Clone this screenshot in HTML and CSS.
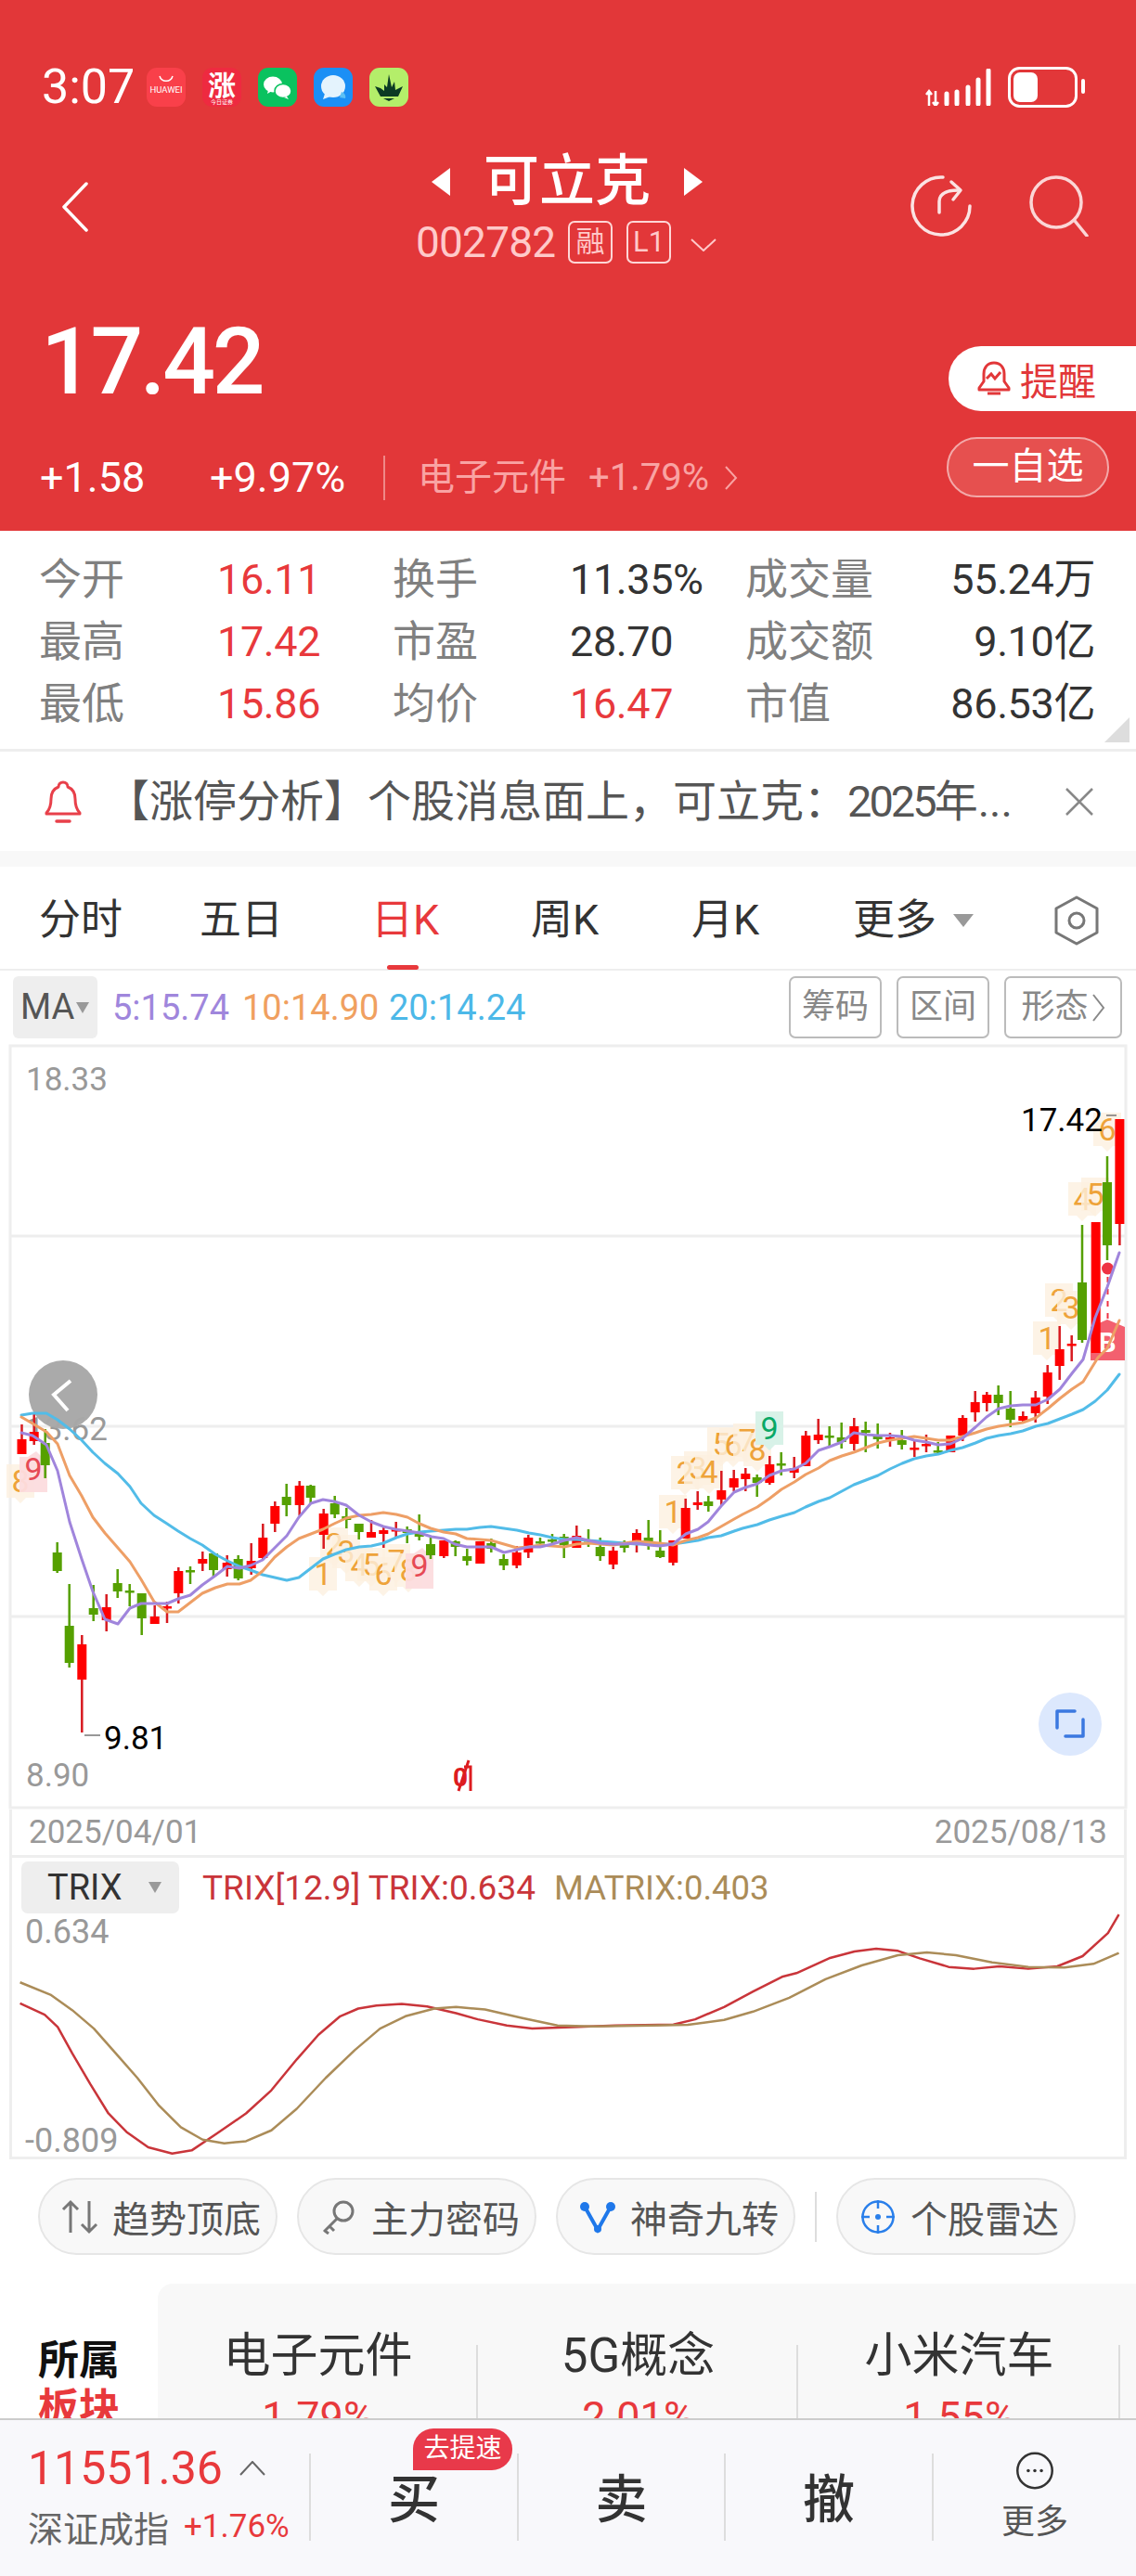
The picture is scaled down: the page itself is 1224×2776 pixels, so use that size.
FILE: index.html
```html
<!DOCTYPE html>
<html lang="zh">
<head>
<meta charset="utf-8">
<title>可立克 002782</title>
<link rel="stylesheet" href="styles.css">
</head>
<body>
<div class="page">
  <header class="header">
    <div class="status">
      <span class="time">3:07</span>
      <div class="apps">
        <svg class="app" viewBox="0 0 42 42"><rect width="42" height="42" rx="11" fill="#f9404a"/><path d="M14 9c2 7 12 7 14 0" fill="none" stroke="#fff" stroke-width="1.5"/><text class="app-txt" x="21" y="27" text-anchor="middle">HUAWEI</text></svg>
        <svg class="app" viewBox="0 0 42 42"><rect width="42" height="42" rx="11" fill="#ee2a40"/><text class="app-zhang" x="21" y="30" text-anchor="middle">涨</text><text class="app-sub" x="21" y="39" text-anchor="middle">今日证券</text></svg>
        <svg class="app" viewBox="0 0 42 42"><rect width="42" height="42" rx="11" fill="#0ac25f"/><ellipse cx="16" cy="18" rx="10" ry="8.5" fill="#fff"/><path d="M11 24l-1 4 5-3z" fill="#fff"/><ellipse cx="27" cy="25" rx="9" ry="7.5" fill="#fff" stroke="#0ac25f" stroke-width="1.5"/><path d="M31 31l2 3-5-2z" fill="#fff"/></svg>
        <svg class="app" viewBox="0 0 42 42"><rect width="42" height="42" rx="11" fill="#1b8ff5"/><ellipse cx="21" cy="20" rx="13" ry="12" fill="#e4f3fd"/><path d="M12 28l-2 6 8-3z" fill="#e4f3fd"/><path d="M30 26c3 1 5 4 4 7l-6-1z" fill="#5cc0f5"/></svg>
        <svg class="app" viewBox="0 0 42 42"><rect width="42" height="42" rx="11" fill="#b4ee6a"/><path d="M6 20l6 2 4 3V18l3 3 2-14 3 14 3-6 1 9 8-4-5 11H12z" fill="#0b3a24"/><path d="M15 33h12l-6 3z" fill="#0b3a24"/></svg>
      </div>
      <div class="sys">
        <svg class="signal" viewBox="0 0 72 40"><path d="M5 40V24M2 28l3-4 3 4M12 24v16M9 36l3 4 3-4" fill="none" stroke="#fff" stroke-width="2.5"/><path d="M24 38V27M35 38V25M47 38V20M58 38V12M69 38V2" fill="none" stroke="#fff" stroke-width="5" stroke-linecap="round"/></svg>
        <svg class="battery" viewBox="0 0 84 44"><rect x="1.5" y="1.5" width="72" height="41" rx="11" fill="none" stroke="#fff" stroke-width="3"/><rect x="6" y="6" width="26" height="32" rx="7" fill="#fff"/><rect x="79" y="13" width="4" height="16" rx="2" fill="#fff"/></svg>
      </div>
    </div>
    <nav class="nav">
      <svg class="back" viewBox="0 0 30 54"><path d="M27 2L3 27l24 25" fill="none" stroke="#fff" stroke-width="3.5" stroke-linecap="round" stroke-linejoin="round"/></svg>
      <div class="nav-mid">
        <div class="title-row"><i class="tri tri-l"></i><span class="name">可立克</span><i class="tri tri-r"></i></div>
        <div class="code-row"><span class="code">002782</span><span class="tag">融</span><span class="tag">L1</span><svg class="code-arrow" viewBox="0 0 28 14"><path d="M1 1l13 12L27 1" fill="none" stroke="#ffc9c9" stroke-width="2"/></svg></div>
      </div>
      <div class="nav-right">
        <svg class="nav-ico" viewBox="0 0 66 66"><path d="M35 2A31 31 0 1 0 64 33" fill="none" stroke="#fbe3e3" stroke-width="3.5" stroke-linecap="round"/><path d="M31 40V28c0-8 8-12 21-12" fill="none" stroke="#fbe3e3" stroke-width="3.5" stroke-linecap="round"/><path d="M44 7l10 9-8 10" fill="none" stroke="#fbe3e3" stroke-width="3.5" stroke-linecap="round" stroke-linejoin="round"/></svg>
        <svg class="nav-ico" viewBox="0 0 66 66"><circle cx="31" cy="29" r="27" fill="none" stroke="#fbd6d6" stroke-width="3.5"/><path d="M51 49l13 16" stroke="#fbd6d6" stroke-width="3.5" stroke-linecap="round"/></svg>
      </div>
    </nav>
    <div class="quote">
      <div class="quote-left">
        <div class="price">17.42</div>
        <div class="change-row">
          <span class="chg chg-a">+1.58</span>
          <span class="chg chg-b">+9.97%</span>
          <i class="vbar"></i>
          <span class="sec-name">电子元件</span>
          <span class="sec-pct">+1.79%</span>
          <svg class="sec-arrow" viewBox="0 0 14 26"><path d="M1 1l11 12L1 25" fill="none" stroke="#f9a3a3" stroke-width="2"/></svg>
        </div>
      </div>
      <div class="quote-right">
        <div class="btn-remind"><svg class="remind-ico" viewBox="0 0 36 40"><path d="M18 3c-7 0-11 5-11 12v8l-5 7v2h32v-2l-5-7v-8c0-7-4-12-11-12z" fill="none" stroke="#e23739" stroke-width="3" stroke-linejoin="round"/><path d="M11 36h14M10 20l5-5 4 5 6-7" fill="none" stroke="#e23739" stroke-width="3"/></svg><span>提醒</span></div>
        <div class="btn-fav"><span>一自选</span></div>
      </div>
    </div>
  </header>

  <section class="stats">
    <span class="lbl">今开</span><span class="val up">16.11</span><span class="lbl">换手</span><span class="val">11.35%</span><span class="lbl">成交量</span><span class="val right">55.24万</span>
    <span class="lbl">最高</span><span class="val up">17.42</span><span class="lbl">市盈</span><span class="val">28.70</span><span class="lbl">成交额</span><span class="val right">9.10亿</span>
    <span class="lbl">最低</span><span class="val up">15.86</span><span class="lbl">均价</span><span class="val up">16.47</span><span class="lbl">市值</span><span class="val right">86.53亿</span>
    <i class="corner"></i>
  </section>

  <section class="notice">
    <svg class="notice-bell" viewBox="0 0 40 46"><path d="M20 2c-3 0-5 2-5 5-5 2-8 7-8 13 0 7-1 11-5 15v1h36v-1c-4-4-5-8-5-15 0-6-3-11-8-13 0-3-2-5-5-5z" fill="none" stroke="#e8404a" stroke-width="3" stroke-linejoin="round"/><path d="M13 44h14" stroke="#e8404a" stroke-width="3.5" stroke-linecap="round"/></svg>
    <span class="notice-text">【涨停分析】个股消息面上，可立克：<span class="tight">2025</span>年...</span>
    <svg class="notice-x" viewBox="0 0 32 30"><path d="M2 1l28 28M30 1L2 29" stroke="#888" stroke-width="2.5"/></svg>
  </section>

  <section class="tabs">
    <span class="tab">分时</span><span class="tab">五日</span><span class="tab active">日K</span><span class="tab">周K</span><span class="tab">月K</span>
    <span class="tab more">更多<i class="caret caret-lg"></i></span>
    <svg class="hex" viewBox="0 0 50 54"><path d="M25 2l22 12v26L25 52 3 40V14z" fill="none" stroke="#777" stroke-width="3" stroke-linejoin="round"/><circle cx="25" cy="27" r="8" fill="none" stroke="#777" stroke-width="3"/></svg>
  </section>

  <section class="ma-row">
    <div class="ma-btn">MA<i class="caret"></i></div>
    <span class="ma ma5">5:15.74</span><span class="ma ma10">10:14.90</span><span class="ma ma20">20:14.24</span>
    <div class="ma-tools"><span class="mini m1">筹码</span><span class="mini m2">区间</span><span class="mini m3">形态<svg class="mini-arrow" viewBox="0 0 14 30"><path d="M1 1l11 14L1 29" fill="none" stroke="#888" stroke-width="2"/></svg></span></div>
  </section>

  <svg class="kline" viewBox="0 1125 1224 825" width="1224" height="825">
    <defs><path id="bub" d="M-15 -19h30v36h-9l-6 6-6-6h-9z"/><path id="bubup" d="M-15 -14h9l9 -6 6 6h6v38h-30z"/></defs>
    <path class="frame" d="M11 1127H1213V1948H11zM11 1332H1213M11 1537H1213M11 1742H1213"/>
    <text class="axis" x="28" y="1175">18.33</text>
    <text class="axis" x="28" y="1552">13.62</text>
    <text class="axis" x="28" y="1925">8.90</text>
    <circle cx="68" cy="1503" r="37" fill="#a7a7a7" opacity=".97"/>
    <path d="M76 1488l-18 15 15 17" fill="none" stroke="#fff" stroke-width="4"/>

    <g class="mk"><use href="#bub" x="22" y="1597"/><text x="22" y="1608">8</text></g>
    <g class="mk pink"><use href="#bubup" x="36" y="1584"/><text x="36" y="1595">9</text></g>
    <g class="mk"><use href="#bub" x="348" y="1697"/><text x="348" y="1708">1</text></g>
    <g class="mk"><use href="#bub" x="360" y="1665"/><text x="360" y="1676">2</text></g>
    <g class="mk"><use href="#bub" x="373" y="1673"/><text x="373" y="1684">3</text></g>
    <g class="mk"><use href="#bub" x="387" y="1687"/><text x="387" y="1698">4</text></g>
    <g class="mk"><use href="#bub" x="400" y="1687"/><text x="400" y="1698">5</text></g>
    <g class="mk"><use href="#bub" x="413" y="1697"/><text x="413" y="1708">6</text></g>
    <g class="mk"><use href="#bub" x="427" y="1683"/><text x="427" y="1694">7</text></g>
    <g class="mk"><use href="#bub" x="440" y="1693"/><text x="440" y="1704">8</text></g>
    <g class="mk pink"><use href="#bubup" x="452" y="1688"/><text x="452" y="1699">9</text></g>
    <g class="mk"><use href="#bub" x="725" y="1630"/><text x="725" y="1641">1</text></g>
    <g class="mk"><use href="#bub" x="738" y="1588"/><text x="738" y="1599">2</text></g>
    <g class="mk"><use href="#bub" x="752" y="1583"/><text x="752" y="1594">3</text></g>
    <g class="mk"><use href="#bub" x="764" y="1587"/><text x="764" y="1598">4</text></g>
    <g class="mk"><use href="#bub" x="777" y="1557"/><text x="777" y="1568">5</text></g>
    <g class="mk"><use href="#bub" x="790" y="1558"/><text x="790" y="1569">6</text></g>
    <g class="mk"><use href="#bub" x="805" y="1553"/><text x="805" y="1564">7</text></g>
    <g class="mk"><use href="#bub" x="816" y="1563"/><text x="816" y="1574">8</text></g>
    <g class="mk mint"><use href="#bub" x="829" y="1540"/><text x="829" y="1551">9</text></g>
    <g class="mk"><use href="#bub" x="1128" y="1443"/><text x="1128" y="1454">1</text></g>
    <g class="mk"><use href="#bub" x="1141" y="1402"/><text x="1141" y="1413">2</text></g>
    <g class="mk"><use href="#bub" x="1154" y="1410"/><text x="1154" y="1421">3</text></g>
    <g class="mk"><use href="#bub" x="1166" y="1293"/><text x="1166" y="1304">4</text></g>
    <g class="mk"><use href="#bub" x="1180" y="1288"/><text x="1180" y="1299">5</text></g>
    <g class="mk"><use href="#bub" x="1193" y="1218"/><text x="1193" y="1229">6</text></g>

    <path d="M1175 1430L1193 1422L1212 1430V1466H1175z" fill="#f3606f"/>
    <text class="b-mark" x="1193" y="1457">B</text>
    <path d="M1193.500 1376V1424" stroke="#ee3344" stroke-width="2" stroke-dasharray="6 7"/>
    <circle cx="1193.500" cy="1367" r="6.500" fill="#ee3344"/>

    <path class="wick-r" d="M23.5 1535V1567M36.7 1522V1557M88.3 1762V1867M114.7 1718V1758M166.7 1730V1750M180 1726V1749M192.3 1689V1728M218.3 1672V1693M244.7 1676V1699M270.7 1663V1697M283.3 1642V1680M296.3 1618V1651M322.7 1596V1633M348.700 1626V1669M400 1638V1657M413.3 1644V1668M426.7 1640V1657M478.3 1660V1679M517.3 1661V1685M556.7 1666V1690M569.3 1654V1679M621.3 1644V1668M660.7 1667V1691M686 1648V1673M725.3 1660V1687M738.7 1615V1658M751.7 1607V1627M777.3 1585V1623M790.7 1584V1607M803.3 1582V1607M829.3 1569V1600M855.7 1570V1593M868.3 1542V1580M881.7 1529V1556M920.3 1528V1563M959 1544V1559M985.3 1552V1570M998 1546V1565M1024.3 1547V1565M1037.3 1525V1553M1050.7 1499V1532M1063.3 1500V1521M1102.3 1521V1533M1115.7 1499V1533M1128.7 1471V1513M1141.7 1429V1487M1154.7 1439V1467M1180.7 1317V1458M1206.4 1206V1342"/>
    <path class="body-r" d="M23.5 1551V1567M36.7 1543V1553M88.3 1772V1810M114.7 1732V1746M166.7 1742V1750M180 1731V1733.500M192.3 1693V1717M218.3 1680V1685M244.7 1684V1691M270.7 1682V1690M283.3 1657V1679M296.3 1623V1642M322.7 1601V1622M348.7 1631V1654M400 1651V1657M413.3 1649V1653M426.7 1648V1650.500M478.3 1660V1677M517.3 1661V1685M556.7 1673V1687M569.3 1657V1673M621.3 1655V1668M660.7 1671V1686M686 1652V1663M725.3 1660V1684M738.7 1625V1658M751.7 1619V1622M777.3 1606V1616M790.7 1593V1603M803.3 1588V1594M829.3 1578V1598M855.7 1582V1587M868.3 1547V1580M881.7 1546V1552M920.3 1537V1556M959 1549V1551.500M985.3 1560V1562.500M998 1556V1558.500M1024.3 1547V1565M1037.3 1528V1547M1050.7 1511V1522M1063.3 1503V1512M1102.3 1526V1531M1115.7 1506V1523M1128.7 1479V1505M1141.7 1454V1472M1154.7 1448V1450.500M1180.7 1317V1458M1206.4 1206V1319"/>
    <path class="wick-g" d="M48.7 1540V1593M61.7 1662V1695M74.7 1707V1797M100.7 1708V1747M126.7 1691V1722M139.7 1707V1731M152.7 1717V1762M205 1688V1707M230 1674V1699M256.7 1676V1703M308.7 1599V1634M334.7 1600V1621M360.7 1612V1636M373.3 1625V1647M386.7 1642V1659M438.7 1645V1663M451.7 1632V1660M464 1657V1680M490.7 1660V1677M503.3 1669V1687M529.3 1658V1673M542.7 1675V1692M582 1657V1667M595 1653V1663M607.7 1653V1679M634 1648V1667M646.7 1657V1682M672.7 1660V1673M698.7 1638V1670M711.3 1649V1679M763.3 1612V1629M815.7 1589V1613M841.7 1565V1590M893.7 1537V1558M906.7 1533V1561M932.7 1532V1565M945.7 1534V1561M971.7 1541V1562M1010.7 1554V1566M1075.7 1493V1525M1088.7 1499V1538M1166 1320V1447M1193 1246V1358"/>
    <path class="body-g" d="M48.7 1555V1579M61.7 1673V1693M74.7 1752V1792M100.7 1733V1740M126.700 1706V1715M139.7 1714V1716.500M152.7 1717V1744M205 1692V1694.500M230 1674V1692M256.7 1680V1701M308.7 1613V1622M334.7 1601V1614M360.7 1620V1632M373.3 1634V1638M386.7 1642V1651M438.7 1648V1652M451.7 1653V1656M464 1664V1676M490.7 1661V1667M503.3 1677V1682M529.3 1663V1669M542.7 1680V1687M582 1661V1663.500M595 1659V1661.500M607.7 1656V1665M634 1659V1661.500M646.7 1667V1677M672.7 1665V1668M698.7 1657V1662M711.3 1671V1678M763.3 1618V1623M815.7 1592V1598M841.7 1577V1579.500M893.7 1547V1549.500M906.7 1549V1554M932.7 1541V1544M945.7 1548V1551M971.7 1552V1557M1010.7 1563V1565.500M1075.7 1503V1512M1088.7 1518V1530M1166 1382V1444M1193 1274V1342"/>

    <polyline class="line ml20" points="23,1525 35,1523 50,1523 62,1530 75,1540 88,1552 100,1565 113,1577 127,1588 140,1602 152,1620 166,1633 180,1642 192,1650 205,1658 218,1665 232,1675 245,1682 258,1688 270,1692 283,1697 296,1700 309,1703 322,1700 335,1690 348,1680 360,1675 373,1670 387,1667 400,1666 413,1663 427,1657 439,1653 452,1651 464,1650 478,1649 491,1648 503,1648 517,1646 529,1645 543,1647 557,1649 570,1652 582,1654 595,1657 608,1659 621,1659 634,1660 647,1661 661,1662 673,1663 686,1664 699,1664 711,1664 725,1664 739,1662 752,1660 763,1657 777,1655 791,1650 800,1647 816,1643 829,1638 842,1634 856,1630 868,1624 882,1618 894,1614 907,1607 920,1600 933,1595 946,1590 959,1583 972,1577 985,1572 998,1569 1011,1567 1024,1563 1037,1560 1051,1555 1063,1550 1076,1547 1089,1545 1102,1542 1116,1537 1129,1534 1142,1529 1155,1524 1167,1519 1180,1510 1193,1498 1206,1481"/>
    <polyline class="line ml10" points="23,1527 35,1534 50,1543 62,1556 75,1590 88,1612 100,1635 113,1652 127,1668 140,1683 152,1702 166,1726 180,1737 192,1737 205,1727 218,1717 232,1711 245,1707 258,1707 270,1703 283,1693 296,1678 309,1667 322,1658 335,1653 348,1648 360,1642 373,1636 387,1633 400,1632 413,1630 427,1632 439,1635 452,1642 464,1647 478,1651 491,1653 503,1658 517,1659 529,1660 543,1664 557,1668 570,1667 582,1665 595,1666 608,1667 621,1664 634,1663 647,1664 661,1665 673,1663 686,1661 699,1662 711,1663 725,1665 739,1660 752,1657 763,1653 777,1645 791,1637 800,1632 816,1624 829,1615 842,1605 856,1597 868,1589 882,1582 894,1574 907,1569 920,1565 933,1560 946,1555 959,1552 972,1550 985,1548 998,1550 1011,1552 1024,1552 1037,1548 1051,1544 1063,1540 1076,1537 1089,1535 1102,1533 1116,1528 1129,1518 1142,1507 1155,1497 1167,1489 1183,1463 1193,1453 1206,1423"/>
    <polyline class="line ml5" points="23,1544 35,1547 50,1557 62,1585 75,1640 88,1680 100,1715 113,1745 127,1750 140,1733 152,1728 166,1728 180,1728 192,1723 205,1719 218,1708 232,1698 245,1688 258,1690 270,1687 283,1681 296,1668 309,1655 322,1635 335,1620 348,1616 360,1618 373,1622 387,1633 400,1640 413,1645 426,1648 440,1650 452,1652 465,1656 478,1658 490,1664 503,1667 517,1667 529,1667 543,1673 557,1670 570,1667 582,1667 595,1664 608,1660 621,1657 634,1660 647,1663 661,1664 673,1664 686,1663 699,1665 711,1666 725,1664 739,1653 752,1648 763,1640 777,1623 791,1608 803,1603 816,1599 829,1590 842,1585 856,1583 868,1577 882,1563 894,1559 907,1554 920,1544 933,1546 946,1547 959,1547 972,1548 985,1552 998,1554 1011,1557 1024,1556 1037,1550 1051,1538 1063,1527 1076,1518 1089,1515 1102,1514 1116,1514 1129,1508 1142,1497 1155,1480 1167,1465 1180,1420 1193,1387 1206,1350"/>

    <text class="hi" x="1100" y="1219">17.42</text>
    <path d="M1192 1202h11M91 1870h17" stroke="#777" stroke-width="1.500"/>
    <text class="hi" x="112" y="1885">9.81</text>
    <circle cx="1153" cy="1858" r="34" fill="#dce8fd"/>
    <path d="M1139 1862v-18h19M1167 1853v18h-19" fill="none" stroke="#3b78e0" stroke-width="3.500" stroke-linecap="round" stroke-linejoin="round"/>
    <text class="flag" x="488" y="1925">0</text>
    <path d="M494 1930l11-33M500 1904h7v26" fill="none" stroke="#dd1c20" stroke-width="3"/>
  </svg>

  <section class="dates"><span>2025/04/01</span><span>2025/08/13</span></section>

  <section class="trix">
    <svg class="trix-plot" viewBox="17 246 1535 969" preserveAspectRatio="none">
      <polyline class="t-line t-red" points="28,718 62,755 80,795 100,880 125,980 150,1075 175,1135 205,1185 238,1205 265,1195 300,1140 340,1075 375,1000 410,900 440,820 470,760 495,735 520,725 555,720 590,728 630,750 660,770 700,790 735,800 790,795 850,790 930,787 960,770 1000,730 1040,680 1080,632 1100,620 1145,572 1180,550 1210,541 1240,548 1270,572 1310,600 1345,606 1380,598 1420,606 1460,598 1495,565 1530,490 1545,430"/>
      <polyline class="t-line t-brown" points="28,650 70,690 100,740 130,800 160,880 190,960 220,1050 250,1120 280,1160 310,1172 340,1165 375,1130 410,1060 450,960 490,870 525,800 560,760 600,735 630,730 670,738 720,765 770,790 820,793 900,790 950,788 1000,772 1040,745 1090,700 1140,640 1190,595 1240,562 1280,553 1320,562 1370,585 1420,600 1470,602 1510,590 1545,555"/>
    </svg>
    <div class="trix-head">
      <div class="trix-btn">TRIX<i class="caret"></i></div>
      <span class="trix-a">TRIX[12.9] TRIX:0.634</span><span class="trix-b">MATRIX:0.403</span>
    </div>
    <span class="trix-max">0.634</span>
    <span class="trix-min">-0.809</span>
  </section>

  <section class="tools">
    <div class="pill"><svg class="pill-ico" viewBox="0 0 40 38"><path d="M10 36V3M2 11l8-8 8 8M30 2v33M22 27l8 8 8-8" fill="none" stroke="#777" stroke-width="3"/></svg><span>趋势顶底</span></div>
    <div class="pill"><svg class="pill-ico" viewBox="0 0 40 38"><circle cx="25" cy="13" r="10" fill="none" stroke="#777" stroke-width="3"/><path d="M18 21L4 35M10 29l5 5M5 34l4 3" fill="none" stroke="#777" stroke-width="3"/></svg><span>主力密码</span></div>
    <div class="pill"><svg class="pill-ico" viewBox="0 0 40 38"><path d="M6 8l14 25L34 8" fill="none" stroke="#1f78ea" stroke-width="4"/><circle cx="6" cy="8" r="5" fill="#1f78ea"/><circle cx="34" cy="8" r="5" fill="#1f78ea"/><circle cx="20" cy="32" r="4" fill="#1f78ea"/></svg><span>神奇九转</span></div>
    <i class="tool-sep"></i>
    <div class="pill"><svg class="pill-ico" viewBox="0 0 40 38"><circle cx="20" cy="19" r="16.500" fill="none" stroke="#2a7fea" stroke-width="2.500"/><circle cx="20" cy="19" r="3" fill="#2a7fea"/><path d="M20 1v9M20 28v9M2 19h9M29 19h9" stroke="#2a7fea" stroke-width="2.500"/></svg><span>个股雷达</span></div>
  </section>

  <section class="sector">
    <div class="sector-lbl"><div class="s-a">所属</div><div class="s-b">板块</div></div>
    <div class="sector-list">
      <div class="s-item"><div class="s-name">电子元件</div><div class="s-pct">1.79%</div></div>
      <div class="s-item"><div class="s-name">5G概念</div><div class="s-pct">2.01%</div></div>
      <div class="s-item"><div class="s-name">小米汽车</div><div class="s-pct">1.55%</div></div>
    </div>
  </section>

  <footer class="bar">
    <div class="index">
      <div class="idx-top"><span class="idx-val">11551.36</span><svg class="idx-caret" viewBox="0 0 28 16"><path d="M1 15L14 1l13 14" fill="none" stroke="#666" stroke-width="2"/></svg></div>
      <div class="idx-bot"><span class="idx-name">深证成指</span><span class="idx-pct">+1.76%</span></div>
    </div>
    <div class="act">买<span class="badge">去提速</span></div>
    <div class="act">卖</div>
    <div class="act">撤</div>
    <div class="more-col"><svg class="more-ico" viewBox="0 0 58 58"><circle cx="29" cy="29" r="26.500" fill="none" stroke="#333" stroke-width="3.500"/><circle cx="19" cy="29" r="2.500" fill="#333"/><circle cx="29" cy="29" r="2.500" fill="#333"/><circle cx="39" cy="29" r="2.500" fill="#333"/></svg><span>更多</span></div>
  </footer>
</div>
</body>
</html>
```

FILE: styles.css
```css
* { box-sizing: border-box; }
html, body { margin: 0; padding: 0; background: #fff; }
body { font-family: Roboto, "Noto Sans CJK SC", sans-serif; color: #333; }
i { display: block; font-style: normal; }
.page { width: 1224px; height: 2776px; overflow: hidden; display: flex; flex-direction: column; }

.header { height: 572px; background: #e23739; color: #fff; flex: none; }
.status { display: flex; align-items: center; height: 42px; margin-top: 73px; padding: 0 54px 0 45px; }
.time { font-size: 52px; line-height: 42px; width: 113px; }
.apps { display: flex; gap: 18px; }
.app { width: 42px; height: 42px; display: block; }
.app-txt { font-size: 9.5px; fill: #fff; }
.app-zhang { font-size: 30px; font-weight: 700; fill: #fff; }
.app-sub { font-size: 6px; fill: #fff; }
.sys { margin-left: auto; display: flex; align-items: center; gap: 18px; }
.signal { width: 72px; height: 40px; display: block; }
.battery { width: 84px; height: 44px; display: block; }

.nav { display: grid; grid-template-columns: 1fr auto 1fr; margin-top: 50px; height: 125px; align-items: start; }
.back { width: 30px; height: 54px; margin: 31px 0 0 66px; display: block; }
.nav-mid { display: flex; flex-direction: column; align-items: center; }
.title-row { display: flex; align-items: center; height: 62px; gap: 36px; margin-left: -2px; }
.name { font-size: 60px; line-height: 62px; font-weight: 500; }
.tri { width: 0; height: 0; border-top: 15px solid transparent; border-bottom: 15px solid transparent; }
.tri-l { border-right: 20px solid #fff; }
.tri-r { border-left: 20px solid #fff; }
.code-row { display: flex; align-items: center; height: 46px; margin-top: 11px; color: #ffc9c9; margin-left: -4px; }
.code { font-size: 46px; line-height: 46px; letter-spacing: -0.8px; width: 164px; }
.tag { width: 48px; height: 46px; border: 2px solid #ffd6d6; border-radius: 7px; font-size: 31px; line-height: 41px; text-align: center; margin-right: 15px; }
.code-arrow { width: 28px; height: 14px; margin: 6px 0 0 6px; display: block; }
.nav-right { display: flex; justify-content: flex-end; gap: 60px; padding: 24px 51px 0 0; }
.nav-ico { width: 66px; height: 66px; display: block; }

.quote { display: flex; justify-content: space-between; height: 282px; }
.quote-left { padding: 50px 0 0 44px; }
.price { font-size: 100px; line-height: 100px; letter-spacing: -3.4px; font-weight: 500; }
.change-row { display: flex; align-items: center; height: 50px; margin-top: 50px; margin-left: -1px; }
.chg { font-size: 45px; line-height: 50px; }
.chg-a { width: 183px; }
.chg-b { width: 187px; }
.vbar { width: 2px; height: 48px; background: #ef8888; }
.sec-name { font-size: 40px; line-height: 50px; color: #f9a3a3; margin-left: 35px; width: 184px; }
.sec-pct { font-size: 40px; line-height: 50px; color: #f9a3a3; width: 147px; }
.sec-arrow { width: 14px; height: 26px; display: block; }
.quote-right { display: flex; flex-direction: column; align-items: flex-end; padding-top: 83px; }
.btn-remind { width: 202px; height: 70px; background: #fff; border-radius: 35px 0 0 35px; display: flex; align-items: center; color: #e23739; font-size: 41px; padding-left: 31px; gap: 10px; }
.remind-ico { width: 36px; height: 40px; display: block; }
.btn-fav { width: 175px; height: 65px; margin: 28px 29px 0 0; border: 2px solid #f3a9a9; border-radius: 33px; background: #e6504f; font-size: 40px; line-height: 60px; text-align: center; }

.stats { position: relative; flex: none; height: 235px; padding: 19px 0 0 42px; display: grid; grid-template-columns: 192px 189px 191px 189px 190px 187px; grid-auto-rows: 67px; align-items: center; }
.lbl { font-size: 46px; line-height: 67px; color: #808080; }
.val { font-size: 45px; line-height: 67px; color: #333; letter-spacing: -0.4px; }
.up { color: #e8393c; }
.right { text-align: right; }
.corner { position: absolute; right: 7px; top: 201px; width: 0; height: 0; border-left: 27px solid transparent; border-bottom: 27px solid #ddd; }

.notice { flex: none; height: 110px; border-top: 3px solid #eee; display: flex; align-items: center; }
.notice-bell { width: 40px; height: 46px; margin-left: 48px; display: block; }
.notice-text { font-size: 47px; line-height: 60px; color: #555; margin-left: 26px; white-space: nowrap; width: 1033px; }
.tight { letter-spacing: -3px; }
.notice-x { width: 32px; height: 30px; display: block; }

.tabs { flex: none; height: 129px; border-top: 17px solid #f8f8f8; border-bottom: 2px solid #eee; padding: 5px 0 0 42px; display: grid; grid-template-columns: 173px 185px 172px 173px 174px 217px 50px; align-items: center; }
.tab { font-size: 45px; line-height: 60px; color: #333; position: relative; display: flex; align-items: center; }
.tab.active { color: #e8393c; }
.tab.active::after { content: ""; position: absolute; left: 17px; top: 78px; width: 34px; height: 5px; background: #e8393c; border-radius: 3px; }
.hex { width: 50px; height: 54px; display: block; margin-left: -1px; }
.caret { width: 0; height: 0; border-left: 7px solid transparent; border-right: 7px solid transparent; border-top: 12px solid #999; margin-left: 2px; }
.caret-lg { border-left-width: 11px; border-right-width: 11px; border-top-width: 14px; margin-left: 18px; }

.ma-row { flex: none; height: 79px; padding: 6px 15px 6px 14px; display: flex; align-items: center; }
.ma-btn { width: 91px; height: 67px; background: #eee; border-radius: 6px; font-size: 38px; line-height: 67px; color: #555; display: flex; align-items: center; padding-left: 8px; }
.ma { font-size: 38px; line-height: 50px; }
.ma5 { color: #9f86dc; margin-left: 16px; width: 140px; }
.ma10 { color: #f0a060; width: 158px; }
.ma20 { color: #4cb8e8; }
.ma-tools { margin-left: auto; display: flex; gap: 16px; }
.mini { height: 67px; border: 2px solid #bbb; border-radius: 7px; font-size: 36px; line-height: 63px; color: #888; display: flex; align-items: center; justify-content: center; }
.m1, .m2 { width: 100px; }
.m3 { width: 127px; gap: 4px; }
.mini-arrow { width: 14px; height: 30px; display: block; }

.kline { display: block; flex: none; }
.frame { fill: none; stroke: #eee; stroke-width: 3; }
.axis { font-size: 35px; fill: #999; }
.hi { font-size: 35px; fill: #000; }
.mk use { fill: rgba(253, 240, 224, .8); }
.mk text { font-size: 34px; fill: #eea33a; text-anchor: middle; }
.mk.pink use { fill: rgba(252, 220, 222, .95); }
.mk.pink text { fill: #e64a55; }
.mk.mint use { fill: #d8f2e8; }
.mk.mint text { fill: #0aa866; }
.b-mark { font-size: 30px; fill: #fff; text-anchor: middle; font-weight: 700; }
.wick-r { stroke: #d81a20; stroke-width: 2.5; fill: none; }
.wick-g { stroke: #55a000; stroke-width: 2.5; fill: none; }
.body-r { stroke: #ff0000; stroke-width: 10; fill: none; }
.body-g { stroke: #55a000; stroke-width: 10; fill: none; }
.line { fill: none; stroke-width: 3; stroke-linejoin: round; stroke-linecap: round; }
.ml5 { stroke: #a085dc; }
.ml10 { stroke: #ee9f66; }
.ml20 { stroke: #52bce8; }
.flag { font-size: 28px; font-weight: 700; fill: #dd1c20; }

.dates { flex: none; height: 52px; margin: 0 10px; padding: 0 18px; border: solid #eee; border-width: 0 3px 3px; display: flex; justify-content: space-between; align-items: center; font-size: 35px; line-height: 48px; color: #999; }

.trix { flex: none; height: 325px; margin: 0 10px; border: solid #eee; border-width: 0 3px 3px; position: relative; }
.trix-plot { position: absolute; left: 0; top: 0; width: 100%; height: 100%; }
.t-line { fill: none; stroke-width: 2.5; vector-effect: non-scaling-stroke; stroke-linejoin: round; }
.t-red { stroke: #c9353a; }
.t-brown { stroke: #ab8c58; }
.trix-head { position: relative; display: flex; align-items: center; padding: 4px 0 0 10px; height: 60px; }
.trix-btn { width: 170px; height: 56px; background: #eee; border-radius: 7px; font-size: 38px; line-height: 56px; color: #333; padding-left: 28px; display: flex; align-items: center; }
.trix-btn .caret { margin-left: 28px; }
.trix-a { font-size: 37px; color: #c9353a; margin-left: 25px; width: 379px; white-space: nowrap; }
.trix-b { font-size: 36.5px; color: #ab8c58; white-space: nowrap; }
.trix-max, .trix-min { position: absolute; left: 14px; font-size: 36px; line-height: 40px; color: #999; }
.trix-max { top: 60px; }
.trix-min { top: 285px; }

.tools { flex: none; height: 134px; padding: 20px 0 0 41px; display: flex; align-items: flex-start; gap: 21px; }
.pill { width: 258px; height: 83px; border: 2px solid #e6e6e6; border-radius: 42px; background: #f8f8f8; display: flex; align-items: center; padding-left: 23px; gap: 15px; font-size: 40px; color: #555; white-space: nowrap; }
.pill-ico { width: 40px; height: 38px; display: block; flex: none; }
.tool-sep { width: 2px; height: 54px; background: #ddd; margin-top: 15px; }

.sector { flex: none; height: 145px; overflow: hidden; display: flex; }
.sector-lbl { width: 170px; padding: 57px 0 0 41px; font-size: 44px; line-height: 52px; font-weight: 700; color: #111; }
.s-b { color: #e8393c; }
.sector-list { flex: 1; background: #f8f8f8; border-radius: 16px 0 0 0; display: grid; grid-template-columns: 345px 345px 347px; }
.s-item { position: relative; text-align: center; padding-top: 48px; }
.s-item::after { content: ""; position: absolute; right: 0; top: 66px; bottom: 0; width: 2px; background: #ddd; }
.s-name { font-size: 51px; line-height: 60px; color: #333; }
.s-pct { font-size: 45px; line-height: 52px; color: #e8393c; margin-top: 10px; }

.bar { flex: none; height: 170px; background: #f8f8fb; border-top: 2px solid #ccc; display: grid; grid-template-columns: 333px 224px 223px 224px 220px; align-items: start; padding-top: 36px; }
.index { padding-left: 30px; height: 94px; margin-top: -6px; }
.idx-top { display: flex; align-items: center; height: 44px; }
.idx-val { font-size: 50px; line-height: 44px; color: #e8393c; }
.idx-caret { width: 28px; height: 16px; margin-left: 18px; display: block; }
.idx-bot { display: flex; align-items: center; margin-top: 20px; height: 40px; white-space: nowrap; }
.idx-name { font-size: 38px; color: #666; }
.idx-pct { font-size: 35px; color: #e8393c; margin-left: 16px; }
.act { position: relative; height: 94px; border-left: 2px solid #ddd; font-size: 56px; line-height: 100px; text-align: center; color: #333; font-weight: 500; }
.badge { position: absolute; left: 110px; top: -27px; width: 107px; height: 45px; background: #e8394a; color: #fff; border-radius: 22px 22px 22px 0; font-size: 28px; line-height: 43px; font-weight: 400; text-align: center; }
.more-col { height: 94px; border-left: 2px solid #ddd; display: flex; flex-direction: column; align-items: center; color: #555; font-size: 36px; line-height: 40px; }
.more-ico { width: 58px; height: 58px; margin-top: -2px; display: block; }
.more-col span { margin-top: 15px; }
```
